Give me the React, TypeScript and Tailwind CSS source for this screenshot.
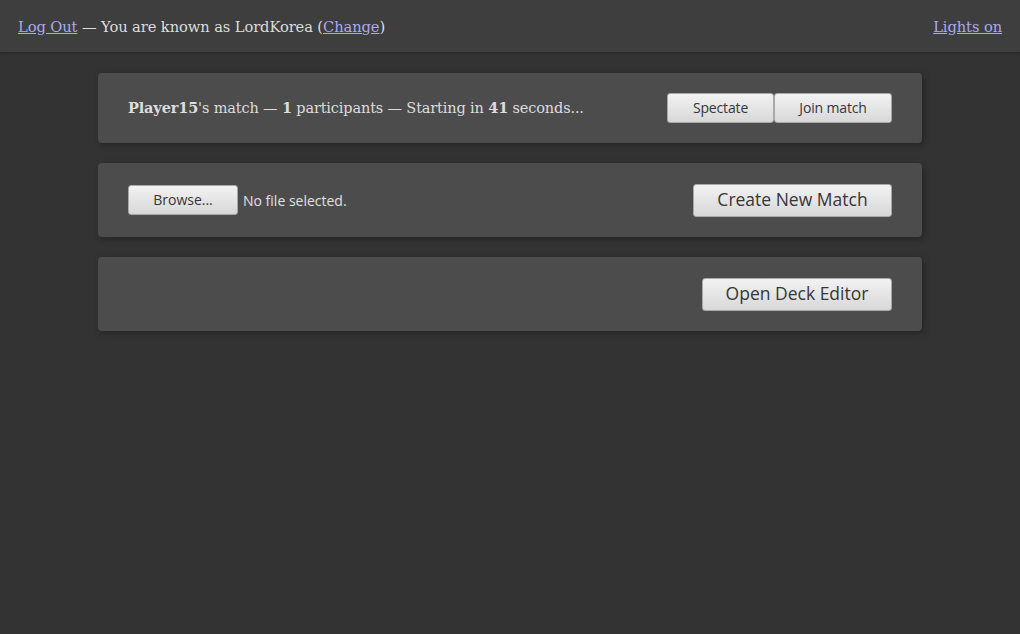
import React from 'react';

const slab = { fontFamily: '"DejaVu Serif", "Liberation Serif", serif' };

function GrayButton({ children, className = '' }: { children: React.ReactNode; className?: string }) {
    return (
        <button
            className={`rounded-[3px] border border-[#a8a8a8] bg-gradient-to-b from-[#f2f2f2] to-[#d8d8d8] text-[#363636] font-['Open_Sans','DejaVu_Sans',sans-serif] leading-none ${className}`}
        >
            {children}
        </button>
    );
}

function Card({ children }: { children: React.ReactNode }) {
    return (
        <div className="flex items-center rounded-[4px] bg-[#4c4c4c] px-[30px] shadow-[2px_2px_6px_rgba(0,0,0,0.3)]">
            {children}
        </div>
    );
}

export default function App() {
    return (
        <div className="min-h-[634px] bg-[#333333] text-[#dddddd]" style={slab}>
            {/* Header */}
            <header className="flex h-[52px] items-center justify-between bg-[#3e3e3e] px-[18px] pt-[2px] text-[14.7px] tracking-[-0.1px] shadow-[0_1px_3px_rgba(0,0,0,0.3)]">
                <div>
                    <a href="#" className="text-[#aaaaee] underline">Log Out</a>
                    {' — You are known as LordKorea ('}
                    <a href="#" className="text-[#aaaaee] underline">Change</a>
                    {')'}
                </div>
                <a href="#" className="text-[#aaaaee] underline">Lights on</a>
            </header>

            <main className="mx-auto mt-[21px] flex w-[824px] flex-col gap-[20px]">
                {/* Pending match */}
                <Card>
                    <div className="flex h-[70px] w-full items-center justify-between text-[14.5px] tracking-[-0.15px]">
                        <p className="pt-[1px]">
                            <b>Player15</b>'s match — <b>1</b> participants — Starting in <b>41</b> seconds...
                        </p>
                        <div className="flex">
                            <GrayButton className="h-[30px] w-[107px] text-[14px]">Spectate</GrayButton>
                            <GrayButton className="h-[30px] w-[118px] text-[14px]">Join match</GrayButton>
                        </div>
                    </div>
                </Card>

                {/* Upload / create */}
                <Card>
                    <div className="flex h-[74px] w-full items-center justify-between">
                        <div className="flex items-center gap-[5px] font-['Open_Sans','DejaVu_Sans',sans-serif] text-[14px]">
                            <GrayButton className="h-[30px] w-[110px] text-[14px]">Browse...</GrayButton>
                            <span className="text-[#e0e0e0]">No file selected.</span>
                        </div>
                        <GrayButton className="h-[33px] w-[199px] text-[17.5px]">Create New Match</GrayButton>
                    </div>
                </Card>

                {/* Deck editor */}
                <Card>
                    <div className="flex h-[74px] w-full items-center justify-end">
                        <GrayButton className="h-[33px] w-[190px] text-[17.5px]">Open Deck Editor</GrayButton>
                    </div>
                </Card>
            </main>
        </div>
    );
}
